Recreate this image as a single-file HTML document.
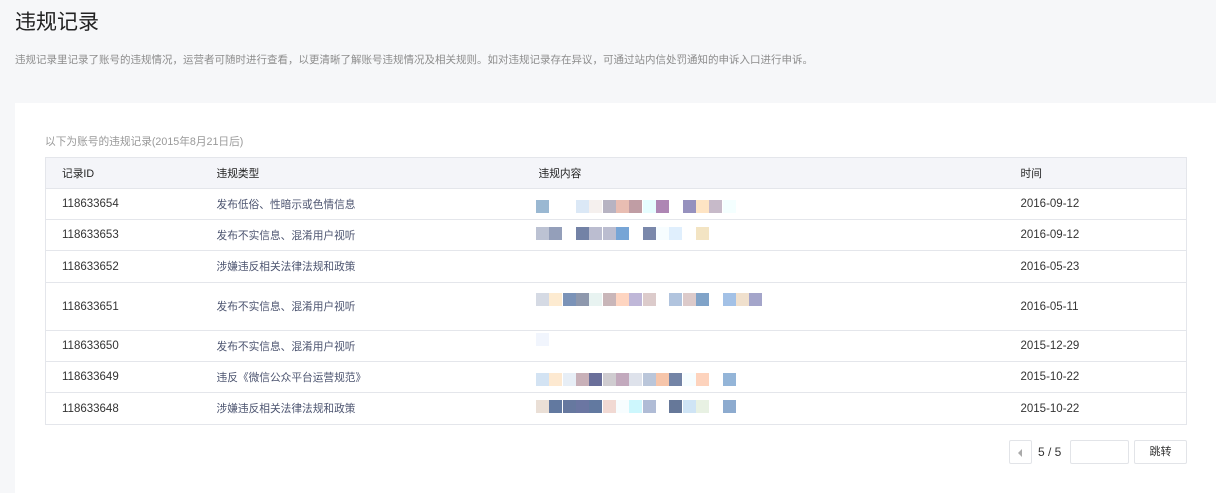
<!DOCTYPE html><html><head><meta charset="utf-8"><style>
*{margin:0;padding:0;box-sizing:border-box}
body{width:1216px;height:493px;background:#f6f7f9;font-family:"Liberation Sans","Noto Sans CJK SC",sans-serif;color:#333;position:relative;overflow:hidden}
.a{position:absolute;white-space:nowrap}
h1{position:absolute;left:15px;top:6px;font-size:21px;font-weight:normal;color:#222}
.desc{left:15px;top:52px;font-size:10.5px;color:#8d8d8d}
.panel{position:absolute;left:15px;top:103px;width:1201px;height:390px;background:#fff}
.sub{left:45px;top:134px;font-size:10.7px;color:#999}
table{position:absolute;left:45px;top:157px;width:1142px;border-collapse:collapse;table-layout:fixed;font-size:11.5px;border:1px solid #e4e6eb}
td{border-top:1px solid #e4e6eb;padding:0;vertical-align:middle}
tr.h td{background:#f4f5f9;height:31px;color:#222;font-size:10.7px}
td.c1{padding-left:16px}
td.c2{color:#4c5470;font-size:10.7px}
.b{position:absolute;width:13px;height:13px}
.btn{position:absolute;border:1px solid #e2e4e8;border-radius:2px;background:#fff}
</style></head><body>
<h1>违规记录</h1>
<div class="a desc">违规记录里记录了账号的违规情况，运营者可随时进行查看，以更清晰了解账号违规情况及相关规则。如对违规记录存在异议，可通过站内信处罚通知的申诉入口进行申诉。</div>
<div class="panel"></div>
<div class="a sub">以下为账号的违规记录(2015年8月21日后)</div>
<table>
<colgroup><col style="width:171px"><col style="width:322px"><col style="width:482px"><col></colgroup>
<tr class="h"><td class="c1">记录ID</td><td>违规类型</td><td>违规内容</td><td>时间</td></tr>
<tr style="height:31px"><td class="c1">118633654</td><td class="c2">发布低俗、性暗示或色情信息</td><td></td><td>2016-09-12</td></tr>
<tr style="height:31px"><td class="c1">118633653</td><td class="c2">发布不实信息、混淆用户视听</td><td></td><td>2016-09-12</td></tr>
<tr style="height:32px"><td class="c1">118633652</td><td class="c2">涉嫌违反相关法律法规和政策</td><td></td><td>2016-05-23</td></tr>
<tr style="height:48px"><td class="c1">118633651</td><td class="c2">发布不实信息、混淆用户视听</td><td></td><td>2016-05-11</td></tr>
<tr style="height:31px"><td class="c1">118633650</td><td class="c2">发布不实信息、混淆用户视听</td><td></td><td>2015-12-29</td></tr>
<tr style="height:31px"><td class="c1">118633649</td><td class="c2">违反《微信公众平台运营规范》</td><td></td><td>2015-10-22</td></tr>
<tr style="height:32px"><td class="c1">118633648</td><td class="c2">涉嫌违反相关法律法规和政策</td><td></td><td>2015-10-22</td></tr>
</table>
<div id="blk"></div>
<div class="btn" style="left:1009px;top:440px;width:23px;height:24px"><div style="position:absolute;left:8px;top:8px;border-right:4px solid #aaa;border-top:4px solid transparent;border-bottom:4px solid transparent"></div></div>
<div class="a" style="left:1038px;top:445px;font-size:12px">5 / 5</div>
<div class="btn" style="left:1070px;top:440px;width:59px;height:24px"></div>
<div class="btn" style="left:1134px;top:440px;width:53px;height:24px;text-align:center;font-size:11px;line-height:22px">跳转</div>
<script>
var rows=[[200,[[0,'#9ab8d2'],[3,'#dbe8f6'],[4,'#f5f0ee'],[5,'#b7b3c2'],[6,'#e8bdb2'],[7,'#c09da4'],[8,'#e6fdff'],[9,'#ae86b4'],[11,'#9691be'],[12,'#fee4c4'],[13,'#c7bac9'],[14,'#f4ffff']]],
[227,[[0,'#bcc2d3'],[1,'#949fba'],[3,'#7382a6'],[4,'#bbbdd0'],[5,'#bbbdd0'],[6,'#77a5d6'],[8,'#7a88ab'],[9,'#f7fdff'],[10,'#e0effd'],[12,'#f3e4c3']]],
[293,[[0,'#d5dae4'],[1,'#fdebd1'],[2,'#7b93b8'],[3,'#8e98ad'],[4,'#e8f3f1'],[5,'#c9b6b9'],[6,'#fed5c1'],[7,'#bfb7d8'],[8,'#dccbcb'],[10,'#b1c4de'],[11,'#dccaca'],[12,'#80a3c8'],[14,'#a3c1e6'],[15,'#f0e0cd'],[16,'#a4a5ca']]],
[333,[[0,'#f1f5fd']]],
[373,[[0,'#d3e3f3'],[1,'#fde9d1'],[2,'#e7eef6'],[3,'#c8b0b8'],[4,'#6a6f9a'],[5,'#cfccd0'],[6,'#c2a9bd'],[7,'#dee2eb'],[8,'#bac6da'],[9,'#f6c5aa'],[10,'#7384a6'],[11,'#f6fdff'],[12,'#fdd3bd'],[14,'#94b5d8']]],
[400,[[0,'#eadfd6'],[1,'#6279a0'],[2,'#66789f'],[3,'#6b76a2'],[4,'#6279a0'],[5,'#f1d9d3'],[6,'#f7fdff'],[7,'#cdf7fd'],[8,'#b0bcd6'],[10,'#667899'],[11,'#cfe4f5'],[12,'#e8f1e3'],[14,'#8dabcf']]]];
var h='';rows.forEach(function(r){r[1].forEach(function(b){h+='<div class="b" style="left:'+Math.round(536+b[0]*13.33)+'px;top:'+r[0]+'px;background:'+b[1]+'"></div>'})});
document.getElementById('blk').innerHTML=h;
</script>
</body></html>
